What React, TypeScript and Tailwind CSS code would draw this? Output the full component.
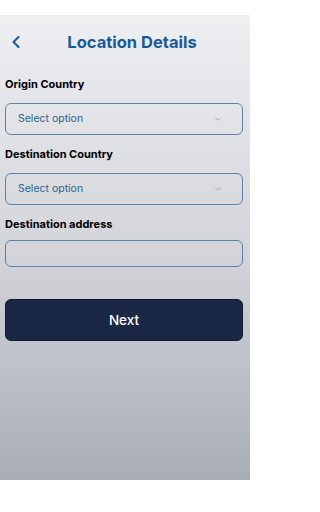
import { ChevronLeft, ChevronDown } from "lucide-react";

const font = { fontFamily: "Inter, 'Noto Sans', sans-serif" };

function SelectField({ label }: { label: string }) {
  return (
    <div>
      <label className="block text-[11px] font-bold text-black leading-none">{label}</label>
      <div className="mt-[13px] w-[238px] h-[32px] flex items-center justify-between rounded-[6px] border border-[#5a83ad] px-[12px]">
        <span className="text-[10.5px] text-[#2f5f8f]">Select option</span>
        <ChevronDown className="h-[10px] w-[10px] text-[#9aa0a8] mr-[7px]" strokeWidth={2} />
      </div>
    </div>
  );
}

export default function App() {
  return (
    <div className="w-[250px] h-[512px] bg-white" style={font}>
      <div className="h-[15px]" />
      <div className="h-[465px] bg-gradient-to-b from-[#eeeff1] via-[#d3d5da] to-[#a9adb6] px-[5px]">
        <div className="relative h-[52px] flex items-center justify-center pt-[2px] pl-[14px]">
          <ChevronLeft className="absolute left-[1px] top-[17px] h-[20px] w-[20px] text-[#1a5a96]" strokeWidth={2.5} />
          <h1 className="text-[16.5px] font-bold text-[#1a5a96] leading-none">Location Details</h1>
        </div>
        <div className="mt-[12px] flex flex-col gap-[14px]">
          <SelectField label="Origin Country" />
          <SelectField label="Destination Country" />
          <div>
            <label className="block text-[11px] font-bold text-black leading-none">Destination address</label>
            <div className="mt-[10px] w-[238px] h-[27px] rounded-[6px] border border-[#5a83ad]" />
          </div>
        </div>
        <button className="mt-[32px] w-[238px] h-[42px] rounded-[6px] bg-[#1b2845] border border-[#0f1a33] text-white text-[13.5px] font-medium">
          Next
        </button>
      </div>
    </div>
  );
}
